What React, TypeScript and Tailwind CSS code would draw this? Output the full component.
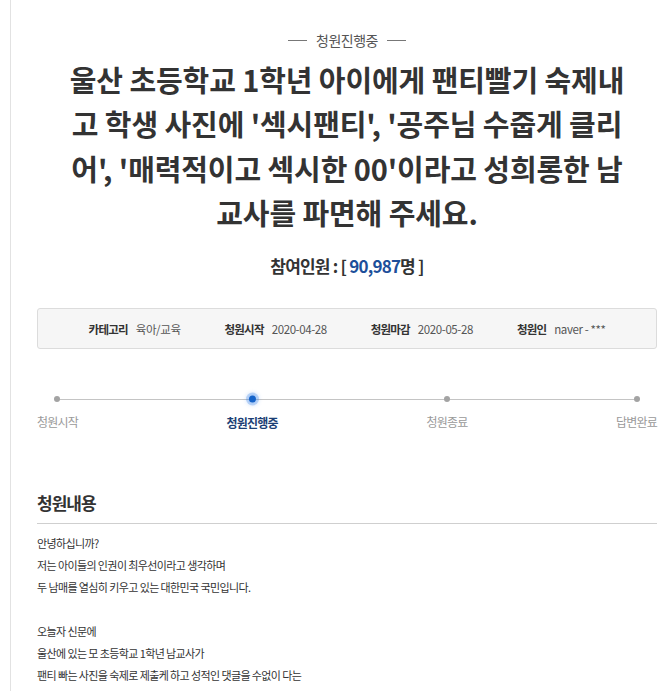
import React from "react";

const titleLines = [
  "울산 초등학교 1학년 아이에게 팬티빨기 숙제내",
  "고 학생 사진에 '섹시팬티', '공주님 수줍게 클리",
  "어', '매력적이고 섹시한 00'이라고 성희롱한 남",
  "교사를 파면해 주세요.",
];

const bodyLines = [
  "안녕하십니까?",
  "저는 아이들의 인권이 최우선이라고 생각하며",
  "두 남매를 열심히 키우고 있는 대한민국 국민입니다.",
  "",
  "오늘자 신문에",
  "울산에 있는 모 초등학교 1학년 남교사가",
  "팬티 빠는 사진을 숙제로 제출케 하고 성적인 댓글을 수없이 다는",
];

const info = [
  { label: "카테고리", value: "육아/교육" },
  { label: "청원시작", value: "2020-04-28" },
  { label: "청원마감", value: "2020-05-28" },
  { label: "청원인", value: "naver - ***" },
];

const steps = [
  { label: "청원시작", active: false },
  { label: "청원진행중", active: true },
  { label: "청원종료", active: false },
  { label: "답변완료", active: false },
];

export default function App() {
  return (
    <div
      className="min-h-screen bg-white text-[#333]"
      style={{ fontFamily: "'Noto Sans CJK KR', 'Noto Sans', sans-serif" }}
    >
      <div className="ml-[10px] min-h-screen border-l border-[#e2e2e2] pl-[26px] pr-[13px] pt-[30px]">
        {/* status */}
        <div className="flex items-center justify-center gap-[9px] text-[14px] leading-[20px] tracking-[-0.5px] text-[#555]">
          <span className="h-px w-[19px] bg-[#777]" />
          <span>청원진행중</span>
          <span className="h-px w-[19px] bg-[#777]" />
        </div>

        {/* title */}
        <h1 className="mt-[7px] text-center text-[29px] font-bold leading-[44.3px] tracking-[-0.1px] text-[#333]">
          {titleLines.map((l) => (
            <div key={l} className="whitespace-nowrap">
              {l}
            </div>
          ))}
        </h1>

        {/* count */}
        <div className="mt-[20px] text-center text-[17px] font-bold leading-[24px] tracking-[-0.8px] text-[#333]">
          참여인원 : [ <span className="text-[#1d4f9a]">90,987</span>명 ]
        </div>

        {/* info box */}
        <div className="mt-[30px] flex h-[41px] items-center justify-center gap-[44px] rounded-[3px] border border-[#dcdcdc] bg-[#f6f6f6] text-[11.5px] leading-[16px]">
          {info.map((i) => (
            <div key={i.label} className="flex items-center gap-[8px]">
              <span className="font-bold tracking-[-0.8px] text-[#333]">{i.label}</span>
              <span className="tracking-[-0.4px] text-[#555]">{i.value}</span>
            </div>
          ))}
        </div>

        {/* timeline */}
        <div className="relative mt-[47px]">
          <div className="absolute left-[21px] right-[21px] top-[3px] h-px bg-[#c4c4c4]" />
          <div className="relative flex justify-between">
            {steps.map((s) => (
              <div key={s.label} className="flex flex-col items-center">
                {s.active ? (
                  <span className="h-[7px] w-[7px] -translate-y-[0.5px] rounded-full bg-[#1563c9] shadow-[0_0_0_3px_rgba(40,120,230,0.25),0_0_4px_3px_rgba(40,120,230,0.2)]" />
                ) : (
                  <span className="h-[6px] w-[6px] rounded-full bg-[#a3a3a3]" />
                )}
                <span
                  className={
                    s.active
                      ? "mt-[12px] text-[12px] font-bold leading-[16px] tracking-[-0.8px] text-[#1c3f75]"
                      : "mt-[12px] text-[12px] leading-[16px] tracking-[-0.8px] text-[#9a9a9a]"
                  }
                >
                  {s.label}
                </span>
              </div>
            ))}
          </div>
        </div>

        {/* content */}
        <div className="mt-[60px]">
          <h2 className="border-b border-[#cfcfcf] pb-[8px] text-[17px] font-bold leading-[24px] tracking-[-1px] text-[#333]">
            청원내용
          </h2>
          <div className="pt-[8px] text-[11px] leading-[22px] tracking-[-0.6px] text-[#333]">
            {bodyLines.map((l, idx) => (
              <div key={idx} className="min-h-[22px] whitespace-nowrap">
                {l}
              </div>
            ))}
          </div>
        </div>
      </div>
    </div>
  );
}
